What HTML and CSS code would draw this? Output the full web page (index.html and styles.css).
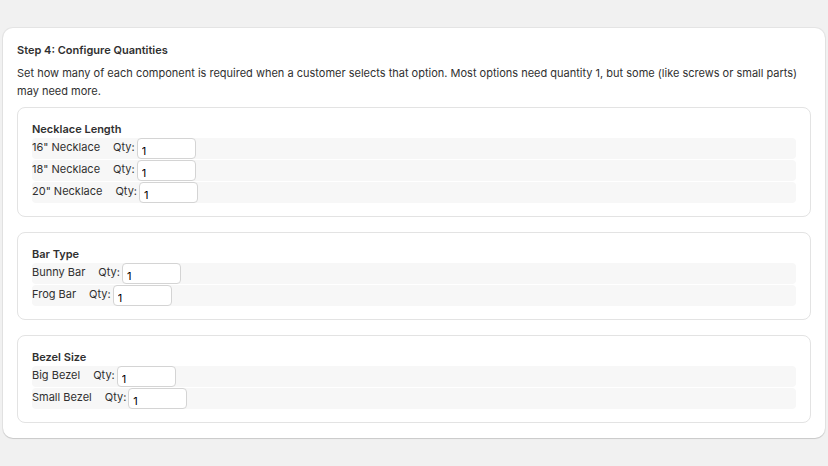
FILE: index.html
```html
<!DOCTYPE html>
<html lang="en">
<head>
    <meta charset="UTF-8">
    <meta name="viewport" content="width=device-width, initial-scale=1.0">
    <title>Step 4: Configure Quantities</title>
    <link rel="stylesheet" href="styles.css">
</head>
<body>
    <div class="card">
        <h2 class="card-title">Step 4: Configure Quantities</h2>
        <p class="card-text">Set how many of each component is required when a customer selects that option. Most options need quantity 1, but some (like screws or small parts) may need more.</p>

        <div class="group">
            <h3>Necklace Length</h3>
            <div class="qty-row">
                <span class="option-name">16" Necklace</span>
                <label class="qty">Qty:<input type="number" value="1"></label>
            </div>
            <div class="qty-row">
                <span class="option-name">18" Necklace</span>
                <label class="qty">Qty:<input type="number" value="1"></label>
            </div>
            <div class="qty-row">
                <span class="option-name">20" Necklace</span>
                <label class="qty">Qty:<input type="number" value="1"></label>
            </div>
        </div>

        <div class="group">
            <h3>Bar Type</h3>
            <div class="qty-row">
                <span class="option-name">Bunny Bar</span>
                <label class="qty">Qty:<input type="number" value="1"></label>
            </div>
            <div class="qty-row">
                <span class="option-name">Frog Bar</span>
                <label class="qty">Qty:<input type="number" value="1"></label>
            </div>
        </div>

        <div class="group">
            <h3>Bezel Size</h3>
            <div class="qty-row">
                <span class="option-name">Big Bezel</span>
                <label class="qty">Qty:<input type="number" value="1"></label>
            </div>
            <div class="qty-row">
                <span class="option-name">Small Bezel</span>
                <label class="qty">Qty:<input type="number" value="1"></label>
            </div>
        </div>
    </div>
</body>
</html>
```

FILE: styles.css
```css
body {
    font-family: Inter, "Noto Sans", Arial, sans-serif;
    font-size: 11px;
    color: #303030;
    margin: 0;
    padding: 28px 3px;
    background-color: #f1f1f1;
}
.card {
    background: white;
    border-radius: 10px;
    box-shadow: 0 0 0 1px rgba(0, 0, 0, 0.05), 0 1px 1px rgba(0, 0, 0, 0.12);
    padding: 12px 14px 15px;
}
.card-title {
    font-size: 11px;
    font-weight: 600;
    line-height: 20px;
    margin: 0 0 4px;
}
.card-text {
    line-height: 18px;
    margin: 0 0 7px;
}
.group {
    border: 1px solid #e3e3e3;
    border-radius: 8px;
    padding: 12px 14px 13px;
    margin-bottom: 15px;
}
.group:last-child {
    margin-bottom: 0;
}
.group h3 {
    font-size: 11px;
    font-weight: 600;
    line-height: 18px;
    margin: 0;
}
.qty-row {
    display: flex;
    align-items: flex-start;
    gap: 13px;
    height: 21px;
    margin-bottom: 1px;
    background-color: #f7f7f7;
    border-radius: 4px;
    line-height: 18px;
}
.qty-row:last-child {
    margin-bottom: 0;
}
.qty {
    display: flex;
    align-items: flex-start;
    gap: 2px;
}
.qty input {
    box-sizing: border-box;
    width: 59px;
    height: 21px;
    margin: 0;
    padding: 4px 4px 0;
    border: 1px solid #d4d4d4;
    border-radius: 4px;
    font-family: Inter, "Noto Sans", Arial, sans-serif;
    font-size: 11px;
    color: #000;
    background: white;
    -moz-appearance: textfield;
}
.qty input::-webkit-inner-spin-button,
.qty input::-webkit-outer-spin-button {
    -webkit-appearance: none;
    margin: 0;
}
```
